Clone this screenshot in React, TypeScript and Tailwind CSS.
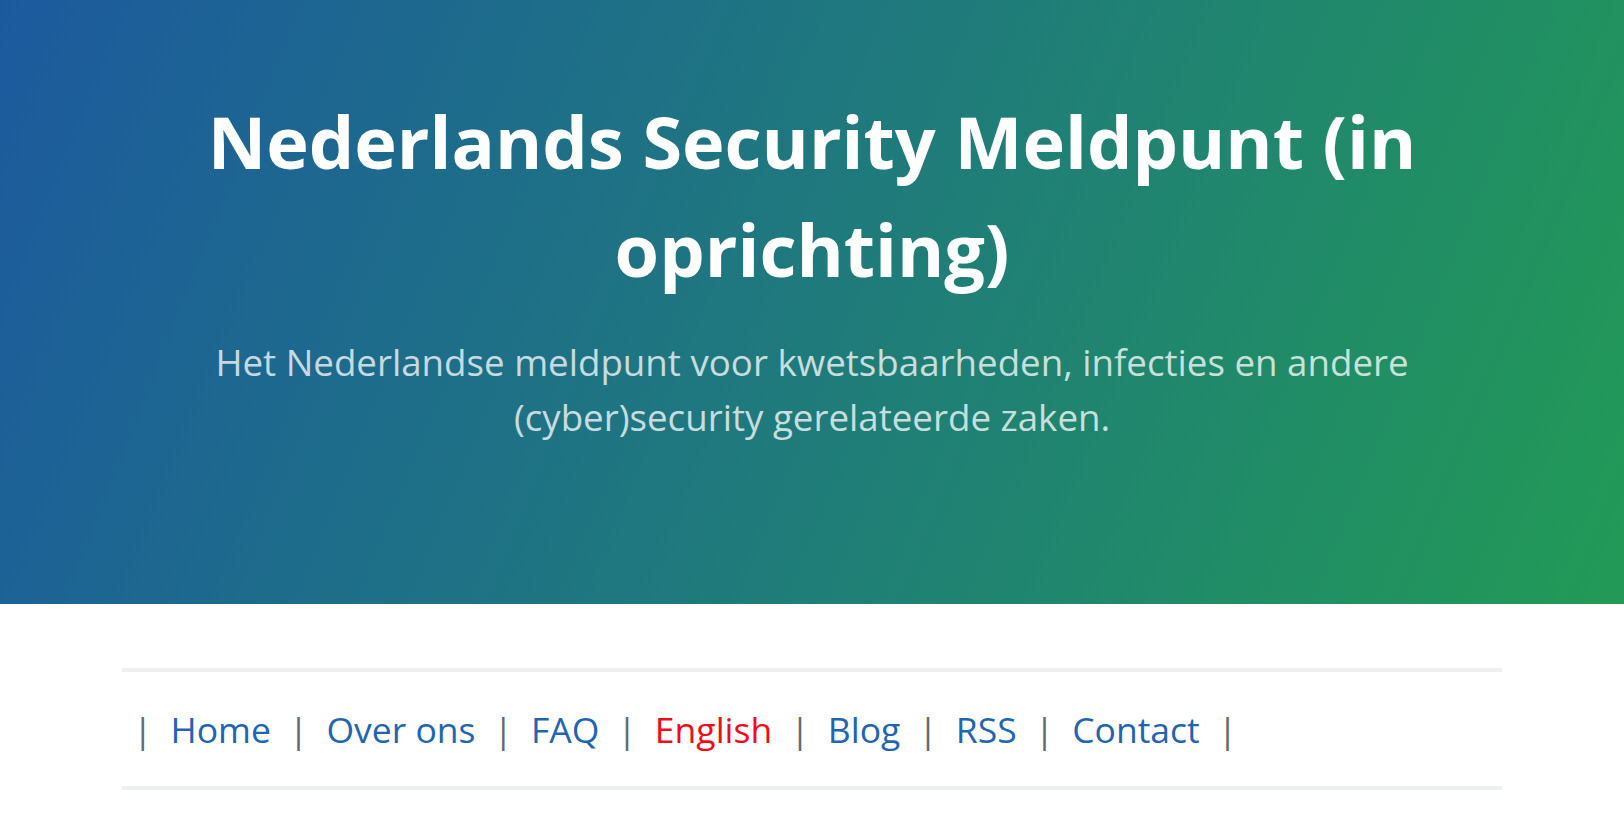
import React from "react";

const links = [
  { label: "Home", active: false },
  { label: "Over ons", active: false },
  { label: "FAQ", active: false },
  { label: "English", active: true },
  { label: "Blog", active: false },
  { label: "RSS", active: false },
  { label: "Contact", active: false },
];

const App = () => {
  return (
    <div className="min-h-screen bg-white font-['Open_Sans',sans-serif]">
      <header className="h-[604px] bg-[linear-gradient(112deg,#1c5a9e_0%,#1f7a7c_50%,#229a56_100%)] pt-[87px]">
        <div className="max-w-[1380px] mx-auto text-center">
          <h1 className="text-[72px] leading-[1.5] font-bold text-white">
            Nederlands Security Meldpunt (in oprichting)
          </h1>
          <p className="mt-8 text-[36.7px] leading-[1.5] text-white/75">
            Het Nederlandse meldpunt voor kwetsbaarheden, infecties en andere (cyber)security gerelateerde zaken.
          </p>
        </div>
      </header>

      <nav className="max-w-[1380px] mx-auto mt-16 border-y-4 border-[#eeeff1] pt-[31px] pb-[30px]">
        <ul className="flex items-center text-[35.5px] leading-[1.5]">
          <li className="text-[#5f6a72] pl-[11px] pr-[18px]">|</li>
          {links.map((link) => (
            <React.Fragment key={link.label}>
              <li>
                <a
                  href="#"
                  className={link.active ? "text-[#f50a1a]" : "text-[#1f65b2]"}
                >
                  {link.label}
                </a>
              </li>
              <li className="text-[#5f6a72] px-[18px]">|</li>
            </React.Fragment>
          ))}
        </ul>
      </nav>
    </div>
  );
};

export default App;
